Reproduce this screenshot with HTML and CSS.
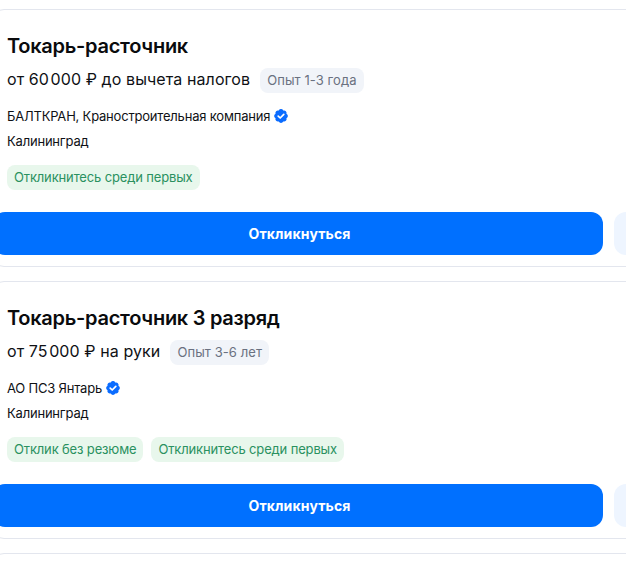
FILE: index.html
```html
<!DOCTYPE html>
<html lang="ru">
<head>
<meta charset="utf-8">
<title>Вакансии</title>
<link rel="stylesheet" href="styles.css">
</head>
<body>
<main class="list">
  <article class="card">
    <h2 class="title">Токарь-расточник</h2>
    <div class="pay-row">
      <span class="pay">от 60&#8202;000 ₽ до вычета налогов</span>
      <span class="exp">Опыт 1-3 года</span>
    </div>
    <div class="company">
      <span>БАЛТКРАН, Краностроительная компания</span>
      <svg class="check" viewBox="0 0 16 16" aria-hidden="true"><path class="seal" d="M13.45 5.74A2.5 2.5 0 0 1 13.45 10.26A2.5 2.5 0 0 1 10.26 13.45A2.5 2.5 0 0 1 5.74 13.45A2.5 2.5 0 0 1 2.55 10.26A2.5 2.5 0 0 1 2.55 5.74A2.5 2.5 0 0 1 5.74 2.55A2.5 2.5 0 0 1 10.26 2.55A2.5 2.5 0 0 1 13.45 5.74z"/><path class="tick" d="M5.2 8.1l2 1.9 3.6-3.7"/></svg>
    </div>
    <div class="city">Калининград</div>
    <div class="tags"><span class="tag">Откликнитесь среди первых</span></div>
    <div class="actions">
      <button class="apply" type="button">Откликнуться</button>
      <span class="side"></span>
    </div>
  </article>
  <article class="card">
    <h2 class="title">Токарь-расточник 3 разряд</h2>
    <div class="pay-row">
      <span class="pay">от 75&#8202;000 ₽ на руки</span>
      <span class="exp">Опыт 3-6 лет</span>
    </div>
    <div class="company">
      <span>АО ПСЗ Янтарь</span>
      <svg class="check" viewBox="0 0 16 16" aria-hidden="true"><path class="seal" d="M13.45 5.74A2.5 2.5 0 0 1 13.45 10.26A2.5 2.5 0 0 1 10.26 13.45A2.5 2.5 0 0 1 5.74 13.45A2.5 2.5 0 0 1 2.55 10.26A2.5 2.5 0 0 1 2.55 5.74A2.5 2.5 0 0 1 5.74 2.55A2.5 2.5 0 0 1 10.26 2.55A2.5 2.5 0 0 1 13.45 5.74z"/><path class="tick" d="M5.2 8.1l2 1.9 3.6-3.7"/></svg>
    </div>
    <div class="city">Калининград</div>
    <div class="tags"><span class="tag">Отклик без резюме</span><span class="tag">Откликнитесь среди первых</span></div>
    <div class="actions">
      <button class="apply" type="button">Откликнуться</button>
      <span class="side"></span>
    </div>
  </article>
  <article class="card"></article>
</main>
</body>
</html>
```
FILE: styles.css
```css
html, body {
  margin: 0;
  height: 100%;
  overflow: hidden;
  background: #fff;
}
body {
  font-family: Inter, "Liberation Sans", sans-serif;
  color: #0f1115;
}
.list {
  display: flex;
  flex-direction: column;
  gap: 14px;
  width: 680px;
  margin-left: -8px;
  padding-top: 9px;
}
.card {
  box-sizing: border-box;
  height: 258px;
  padding: 24px 0 0 14px;
  border: 1px solid #e3e6ee;
  border-radius: 12px;
  flex: none;
}
.title {
  margin: 0;
  font-size: 20px;
  line-height: 24px;
  font-weight: 600;
  letter-spacing: -0.28px;
  color: #0a0b0d;
}
.pay-row {
  display: flex;
  align-items: flex-start;
  gap: 10px;
  margin-top: 10px;
}
.pay {
  font-size: 16px;
  line-height: 24px;
  letter-spacing: 0.09px;
  margin-top: -1px;
}
.exp {
  padding: 0 7px;
  height: 25px;
  line-height: 25px;
  border-radius: 8px;
  background: #f1f4f9;
  color: #6a7180;
  font-size: 13px;
  letter-spacing: 0.08px;
}
.company {
  display: flex;
  align-items: center;
  gap: 3px;
  margin-top: 13px;
  font-size: 13px;
  line-height: 20px;
  letter-spacing: -0.2px;
}
.check {
  width: 16px;
  height: 16px;
}
.seal { fill: #0a6cff; }
.tick {
  fill: none;
  stroke: #fff;
  stroke-width: 1.7;
  stroke-linecap: round;
  stroke-linejoin: round;
}
.city {
  margin-top: 5px;
  font-size: 13px;
  line-height: 20px;
  letter-spacing: -0.2px;
}
.tags {
  display: flex;
  gap: 8px;
  margin-top: 14px;
}
.tag {
  padding: 0 7px;
  height: 25px;
  line-height: 25px;
  border-radius: 8px;
  background: #e8f7ec;
  color: #2a9160;
  font-size: 13px;
  letter-spacing: -0.15px;
}
.actions {
  display: flex;
  gap: 11px;
  margin: 22px 0 0 -14px;
}
.apply {
  width: 610px;
  height: 43px;
  padding: 0 0 0 3px;
  border: 0;
  border-radius: 12px;
  background: #0070ff;
  color: #fff;
  font: 700 14px/43px Inter, "Liberation Sans", sans-serif;
  letter-spacing: 0.1px;
}
.side {
  width: 43px;
  height: 43px;
  border-radius: 12px;
  background: #eef5ff;
}
```
